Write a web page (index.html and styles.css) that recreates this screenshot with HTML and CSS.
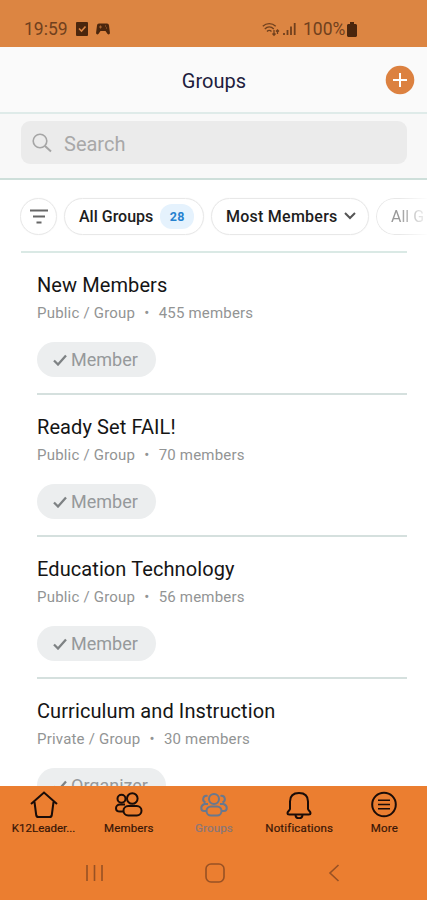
FILE: index.html
```html
<!DOCTYPE html>
<html lang="en">
<head>
<meta charset="utf-8">
<meta name="viewport" content="width=device-width">
<title>Groups</title>
<link rel="stylesheet" href="styles.css">
</head>
<body>
<svg class="defs" aria-hidden="true">
  <symbol id="check" viewBox="0 0 14 12"><path d="M1 6.5 5 10.5 13 1.5" fill="none" stroke="currentColor" stroke-width="2.3"/></symbol>
</svg>
<div class="phone">
  <div class="status">
    <span class="clock">19:59</span>
    <svg class="task" width="12" height="14" viewBox="0 0 12 14"><rect width="12" height="14" rx="1" fill="#4b260d"/><path d="M3 6.5 5.5 9 9.5 4.5" fill="none" stroke="#dc8542" stroke-width="1.6"/></svg>
    <svg class="pad" width="14" height="12" viewBox="0 0 14 12"><path d="M3 0.5h8c1.2 0 1.8.8 2 2l.9 7c.2 2-1.6 2.500-2.500 1.200L9.500 8h-5l-1.900 2.700C1.700 12-.1 11.500.1 9.500l.9-7C1.200 1.300 1.800.5 3 .5Z" fill="#4b260d"/><path d="M3 4h3M4.500 2.500v3M9 3h1M10 5h1" stroke="#a8622f"/></svg>
    <svg class="wifi" width="18" height="15" viewBox="0 0 18 15" fill="none" stroke="#70401d" stroke-width="1.4"><path d="M.8 4.200C4.500.7 10 .7 13.700 4.200M2.800 7c2.700-2.600 6.300-2.600 9 0M5 9.500c1.300-1.300 3.200-1.300 4.500 0"/><path d="M12 8v5M10.500 11.500 12 13.300l1.500-1.800M15.500 12V8M14 9.500 15.500 8 17 9.500" stroke-width="1.300"/></svg>
    <svg class="signal" width="13" height="14" viewBox="0 0 13 14" stroke="#70401d" stroke-width="1.800"><path d="M1 11v2M4.500 8v5M8 4.500V13M11.700 1v12"/></svg>
    <span class="percent">100%</span>
    <svg class="battery" width="10" height="15" viewBox="0 0 10 15"><path d="M3 0h4v2h2l1 1v11l-1 1H1l-1-1V3l1-1h2Z" fill="#4b260d"/></svg>
  </div>
  <header class="header">
    <h1>Groups</h1>
    <svg class="add" width="30" height="30" viewBox="0 0 30 30"><circle cx="15" cy="15" r="14.300" fill="#dc8140"/><path d="M8 15h14M15 8v14" stroke="#fff" stroke-width="2"/></svg>
  </header>
  <div class="search-area">
    <div class="search">
      <svg width="20" height="20" viewBox="0 0 20 20" fill="none" stroke="#a5a5a5" stroke-width="1.600"><circle cx="8" cy="8" r="6.800"/><path d="m13 13 6 5.500" stroke-width="2"/></svg>
      <span>Search</span>
    </div>
  </div>
  <div class="filters">
    <div class="round"><svg width="18" height="15" viewBox="0 0 18 15" stroke="#666" stroke-width="2"><path d="M0 1.500h18M3 7.500h12M6.500 13.500h5"/></svg></div>
    <div class="pill all"><span>All Groups</span><b>28</b></div>
    <div class="pill most"><span>Most Members</span><svg width="12" height="8" viewBox="0 0 12 8"><path d="m1 1 5 5 5-5" fill="none" stroke="#555" stroke-width="2"/></svg></div>
    <div class="pill next"><span>All G</span></div>
  </div>
  <main class="list">
    <section class="group"><h2>New Members</h2><p>Public / Group<i>•</i>455 members</p><div class="badge"><svg width="14" height="12"><use href="#check"/></svg><span>Member</span></div></section>
    <section class="group"><h2>Ready Set FAIL!</h2><p>Public / Group<i>•</i>70 members</p><div class="badge"><svg width="14" height="12"><use href="#check"/></svg><span>Member</span></div></section>
    <section class="group"><h2>Education Technology</h2><p>Public / Group<i>•</i>56 members</p><div class="badge"><svg width="14" height="12"><use href="#check"/></svg><span>Member</span></div></section>
    <section class="group"><h2>Curriculum and Instruction</h2><p>Private / Group<i>•</i>30 members</p><div class="badge organizer"><svg width="14" height="12"><use href="#check"/></svg><span>Organizer</span></div></section>
  </main>
  <footer>
    <nav class="tabs">
      <div class="tab home"><svg width="28" height="28" viewBox="0 0 28 28"><path d="M1 13 14 1.500 27 13M4.500 11l1.700 13c.2 1.500 1 2 2.300 2h11c1.300 0 2.100-.5 2.300-2l1.700-13"/></svg><span>K12Leader...</span></div>
      <div class="tab"><svg width="28" height="28" viewBox="0 0 28 28"><circle cx="6.500" cy="7.800" r="4"/><circle cx="17.300" cy="7.500" r="5.300"/><path d="M8.500 20.500H5c-2.500 0-4-1.500-4-3.300s1.500-3.700 4-3.700h5"/><rect x="8.500" y="15" width="18" height="9.500" rx="4.700"/></svg><span>Members</span></div>
      <div class="tab active"><svg width="28" height="28" viewBox="0 0 28 28"><circle cx="14" cy="8" r="5"/><path d="M7.500 5C3 4 1.500 10 5.500 11.500M20.500 5c4.500-1 6 5 2 6.500M7 20H4c-3.500 0-4-5.500.5-7H8M21 20h3c3.500 0 4-5.500-.5-7H20"/><rect x="6.500" y="15.500" width="15" height="9" rx="4.500"/></svg><span>Groups</span></div>
      <div class="tab"><svg width="28" height="28" viewBox="0 0 28 28"><path d="M5 18V10.500C5 5 8.500 2 14 2s9 3 9 8.500V18c0 1.200 2.500 2.500 2.500 4 0 1-.7 1.500-1.800 1.500H4.300c-1.100 0-1.800-.5-1.800-1.500 0-1.500 2.500-2.800 2.500-4ZM10.500 23.500c0 5 7 5 7 0"/></svg><span>Notifications</span></div>
      <div class="tab"><svg width="28" height="28" viewBox="0 0 28 28"><circle cx="14" cy="13.500" r="11.800"/><path d="M8 9.300h12M8 13.500h12M8 17.700h12" stroke-width="1.500"/></svg><span>More</span></div>
    </nav>
    <div class="system">
      <svg width="20" height="18" viewBox="0 0 20 18"><path d="M2 1v16M9.500 1v16M17 1v16"/></svg>
      <svg width="20" height="20" viewBox="0 0 20 20"><rect x="1" y="1" width="18" height="18" rx="5"/></svg>
      <svg width="20" height="18" viewBox="0 0 20 18"><path d="M14.500 1 6 9l8.500 8"/></svg>
    </div>
  </footer>
</div>
</body>
</html>
```
FILE: styles.css
```css
* { box-sizing: border-box; }
body { margin: 0; font-family: Roboto, sans-serif; background: #fff; }
h1, h2, p { margin: 0; font-weight: 400; }
svg { display: block; flex: none; }
span { white-space: nowrap; }
.defs { position: absolute; width: 0; height: 0; }
.phone { width: 427px; height: 900px; display: flex; flex-direction: column; overflow: hidden; }
.status { height: 47px; flex: none; background: #dc8542; display: flex; align-items: center; padding: 11px 70px 0 24px; color: #70401d; font-size: 17.5px; }
.clock { width: 43px; }
.task { margin-left: 9px; }
.pad { margin-left: 8px; }
.wifi { margin-left: auto; }
.signal { margin: 0 7px 0 3px; }
.percent { width: 43px; font-size: 17.5px; }
.battery { margin-left: 1px; }
.header { height: 67px; flex: none; background: #fafafa; border-bottom: 2px solid #dfebe9; display: grid; grid-template-columns: 1fr auto 1fr; align-items: center; padding: 0 12px; }
h1 { grid-column: 2; font-size: 20px; letter-spacing: .05px; color: #211c3d; padding: 2px 0 0 1px; }
.add { justify-self: end; }
.search-area { height: 66px; flex: none; background: #f8f8f8; border-bottom: 2px solid #cedfda; padding: 7px 20px 0 21px; }
.search { height: 43px; background: #ebebeb; border-radius: 9px; display: flex; align-items: center; padding-left: 11px; gap: 12px; font-size: 20px; color: #a8a8a8; }
.search span { padding-top: 2px; }
.filters { height: 74px; flex: none; margin: 0 0 0 20px; padding-bottom: 2px; display: flex; align-items: center; gap: 7px; overflow: hidden; font-weight: 500; font-size: 16px; color: #1d1d1d; position: relative; }
.filters::after { content: ""; position: absolute; left: 1px; right: 20px; bottom: 1px; height: 2px; background: #dae9e5; }
.round, .pill { height: 37px; border: 1.500px solid #e8e8e8; box-shadow: 0 0 1px #e4e4e4; border-radius: 19px; display: flex; align-items: center; flex: none; }
.round { width: 37px; justify-content: center; }
.pill { padding-left: 14px; }
.all { width: 140px; }
.all b { background: #e5f2fd; color: #2581cf; font-size: 12.500px; border-radius: 12px; padding: 5px 9px; margin-left: 7px; width: 34px; text-align: center; letter-spacing: .5px; }
.most { width: 158px; gap: 6px; letter-spacing: .25px; }
.next { width: 51px; border-right: 0; border-radius: 19px 0 0 19px; font-weight: 400; color: #999; -webkit-mask-image: linear-gradient(90deg, #000 45%, transparent 105%); mask-image: linear-gradient(90deg, #000 45%, transparent 105%); }
.list { flex: 1; min-height: 0; overflow: hidden; margin: -1px 20px 0 37px; }
.group { height: 142px; border-bottom: 2px solid #d5e0de; padding-top: 19px; }
h2 { font-size: 20px; line-height: 26px; color: #151515; letter-spacing: .09px; }
p { font-size: 15px; line-height: 20px; margin-top: 5px; color: #929494; letter-spacing: .2px; }
i { display: inline-block; width: 23.500px; text-align: center; font-style: normal; font-size: 15px; }
.badge { width: 119px; height: 35px; background: #eceeef; border-radius: 18px; margin-top: 19px; padding-left: 16px; display: flex; align-items: center; gap: 4px; font-size: 18px; color: #96999b; }
.badge svg { color: #7e8284; }
.organizer { width: 129px; }
footer { height: 114px; flex: none; background: #eb7e30; }
.tabs { height: 55px; display: grid; grid-template-columns: repeat(5, 1fr); padding: 5px 0 0 1px; }
.tab { display: flex; flex-direction: column; align-items: center; color: #391607; font-size: 11.500px; font-weight: 400; line-height: 14px; gap: 2px; letter-spacing: .15px; -webkit-text-stroke: .2px; }
.tab svg { fill: none; stroke: #1a0c08; stroke-width: 2; }
.home { letter-spacing: 0; }
.active { color: #87777a; }
.active svg { stroke: #69788e; }
.system { display: flex; justify-content: space-between; align-items: center; height: 64px; padding: 0 83px 0 85px; }
.system svg { fill: none; stroke: #985124; stroke-width: 1.600; }
```
